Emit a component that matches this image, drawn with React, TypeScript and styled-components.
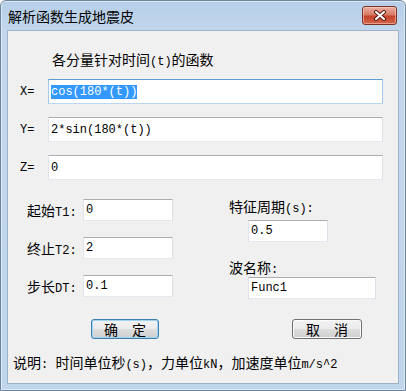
import styled, { createGlobalStyle } from 'styled-components';

const CJK = '"Noto Sans CJK SC", "Noto Sans", sans-serif';
const MONO = '"Liberation Mono", "Noto Sans CJK SC", monospace';

const GlobalStyle = createGlobalStyle`
  html, body {
    margin: 0;
    padding: 0;
    background: #ffffff;
  }
  body {
    font-family: ${CJK};
  }
`;

const Window = styled.div`
  width: 406px;
  height: 391px;
  box-sizing: border-box;
  border: 1px solid #70849b;
  border-radius: 6px 6px 0 0;
  background: linear-gradient(to bottom, #b6cee8 0px, #c2d7ed 30px, #c0d6ec 100%);
  box-shadow: inset 0 0 0 1px #dbe8f5;
  padding: 0 6px 6px 6px;
  display: flex;
  flex-direction: column;
`;

const TitleBar = styled.div`
  height: 29px;
  display: flex;
  align-items: center;
  padding-left: 1px;
`;

const Title = styled.div`
  font: 14px ${CJK};
  line-height: 20px;
  color: #000;
  margin-top: 1px;
`;

const CloseButton = styled.div`
  margin-left: auto;
  margin-right: 2px;
  align-self: flex-start;
  margin-top: 5px;
  width: 35px;
  height: 19px;
  box-sizing: border-box;
  border: 1px solid #7a3325;
  border-radius: 3px;
  background: linear-gradient(to bottom, #eab0a2 0%, #d87a63 45%, #c4432a 55%, #d5654b 100%);
  box-shadow: inset 0 0 0 1px rgba(255, 220, 210, 0.5);
  display: flex;
  align-items: center;
  justify-content: center;
`;

const Content = styled.div`
  flex: 1;
  background: #f0f0f0;
  border: 1px solid #9fb3c8;
  display: flex;
  flex-direction: column;
  font: 14px ${CJK};
  color: #000;
`;

// half-width latin runs inside the chinese labels
const Latin = styled.span`
  font: 12px ${MONO};
`;

const Heading = styled.div`
  margin: 18px 0 0 44px;
  line-height: 20px;
`;

const FormulaList = styled.div`
  margin-top: 10px;
  padding-left: 12px;
  display: flex;
  flex-direction: column;
  gap: 13px;
`;

const FormulaRow = styled.div`
  display: flex;
  align-items: center;
`;

const AxisLabel = styled.div`
  width: 28px;
  font: 12px ${MONO};
`;

const Field = styled.div<{ $w: number; $h: number; $focused?: boolean }>`
  width: ${(p) => p.$w}px;
  height: ${(p) => p.$h}px;
  box-sizing: border-box;
  background: #ffffff;
  border: 1px solid;
  border-color: ${(p) =>
    p.$focused ? '#5d9cd3 #a3c8ea #b9d8f0 #a3c8ea' : '#abadb3 #dbdfe6 #e3e9ef #e2e3ea'};
  padding-left: 2px;
  display: flex;
  align-items: center;
  font: 12px ${MONO};
  color: #000;
  white-space: pre;
`;

const Selected = styled.span`
  background: #3399ff;
  color: #ffffff;
`;

const Lower = styled.div`
  margin-top: 16px;
  padding-left: 19px;
  display: flex;
`;

const LeftCol = styled.div`
  width: 202px;
  padding-top: 3px;
  display: flex;
  flex-direction: column;
  gap: 16px;
`;

const ParamRow = styled.div`
  display: flex;
  align-items: center;
`;

const ParamLabel = styled.div`
  width: 56px;
  line-height: 20px;
  white-space: pre;
`;

const RightCol = styled.div`
  display: flex;
  flex-direction: column;
`;

const SideLabel = styled.div<{ $gap?: number }>`
  line-height: 20px;
  margin-top: ${(p) => p.$gap ?? 0}px;
`;

const SideField = styled(Field)<{ $gap?: number }>`
  margin-left: 19px;
  margin-top: ${(p) => p.$gap ?? 0}px;
`;

const ButtonRow = styled.div`
  margin-top: 20px;
  padding-left: 83px;
  display: flex;
  gap: 133px;
`;

const DialogButton = styled.div<{ $w: number; $default?: boolean }>`
  width: ${(p) => p.$w}px;
  height: 20px;
  box-sizing: border-box;
  border: 1px solid ${(p) => (p.$default ? '#3c7fb1' : '#707070')};
  border-radius: 3px;
  background: linear-gradient(to bottom, #f2f2f2 0%, #ebebeb 48%, #dddddd 52%, #cfcfcf 100%);
  box-shadow: inset 0 0 0 1px ${(p) => (p.$default ? '#9fd5f3' : '#fbfbfb')};
  display: flex;
  align-items: center;
  justify-content: center;
  font: 14px ${CJK};
  line-height: 18px;
  color: #000;
`;

const Note = styled.div`
  margin-top: 13px;
  padding-left: 5px;
  line-height: 20px;
  white-space: pre;
`;

function CloseIcon() {
  return (
    <svg width="14" height="11" viewBox="0 0 14 11">
      <path d="M3 2 L11 9 M11 2 L3 9" stroke="#5a1f14" strokeWidth="4" strokeLinecap="round" />
      <path d="M3 2 L11 9 M11 2 L3 9" stroke="#ffffff" strokeWidth="2" strokeLinecap="round" />
    </svg>
  );
}

export default function App() {
  return (
    <>
      <GlobalStyle />
      <Window>
        <TitleBar>
          <Title>解析函数生成地震皮</Title>
          <CloseButton>
            <CloseIcon />
          </CloseButton>
        </TitleBar>
        <Content>
          <Heading>
            各分量针对时间<Latin>(t)</Latin>的函数
          </Heading>
          <FormulaList>
            <FormulaRow>
              <AxisLabel>X=</AxisLabel>
              <Field $w={335} $h={25} $focused>
                <Selected>cos(180*(t))</Selected>
              </Field>
            </FormulaRow>
            <FormulaRow>
              <AxisLabel>Y=</AxisLabel>
              <Field $w={335} $h={25}>2*sin(180*(t))</Field>
            </FormulaRow>
            <FormulaRow>
              <AxisLabel>Z=</AxisLabel>
              <Field $w={335} $h={25}>0</Field>
            </FormulaRow>
          </FormulaList>
          <Lower>
            <LeftCol>
              <ParamRow>
                <ParamLabel>
                  起始<Latin>T1: </Latin>
                </ParamLabel>
                <Field $w={90} $h={22}>0</Field>
              </ParamRow>
              <ParamRow>
                <ParamLabel>
                  终止<Latin>T2: </Latin>
                </ParamLabel>
                <Field $w={90} $h={22}>2</Field>
              </ParamRow>
              <ParamRow>
                <ParamLabel>
                  步长<Latin>DT: </Latin>
                </ParamLabel>
                <Field $w={90} $h={22}>0.1</Field>
              </ParamRow>
            </LeftCol>
            <RightCol>
              <SideLabel>
                特征周期<Latin>(s):</Latin>
              </SideLabel>
              <SideField $w={80} $h={22} $gap={4}>0.5</SideField>
              <SideLabel $gap={15}>
                波名称<Latin>:</Latin>
              </SideLabel>
              <SideField $w={128} $h={22}>Func1</SideField>
            </RightCol>
          </Lower>
          <ButtonRow>
            <DialogButton $w={68} $default>确　定</DialogButton>
            <DialogButton $w={70}>取　消</DialogButton>
          </ButtonRow>
          <Note>
            说明<Latin>: </Latin>时间单位秒<Latin>(s)</Latin>，力单位<Latin>kN</Latin>，加速度单位
            <Latin>m/s^2</Latin>
          </Note>
        </Content>
      </Window>
    </>
  );
}
